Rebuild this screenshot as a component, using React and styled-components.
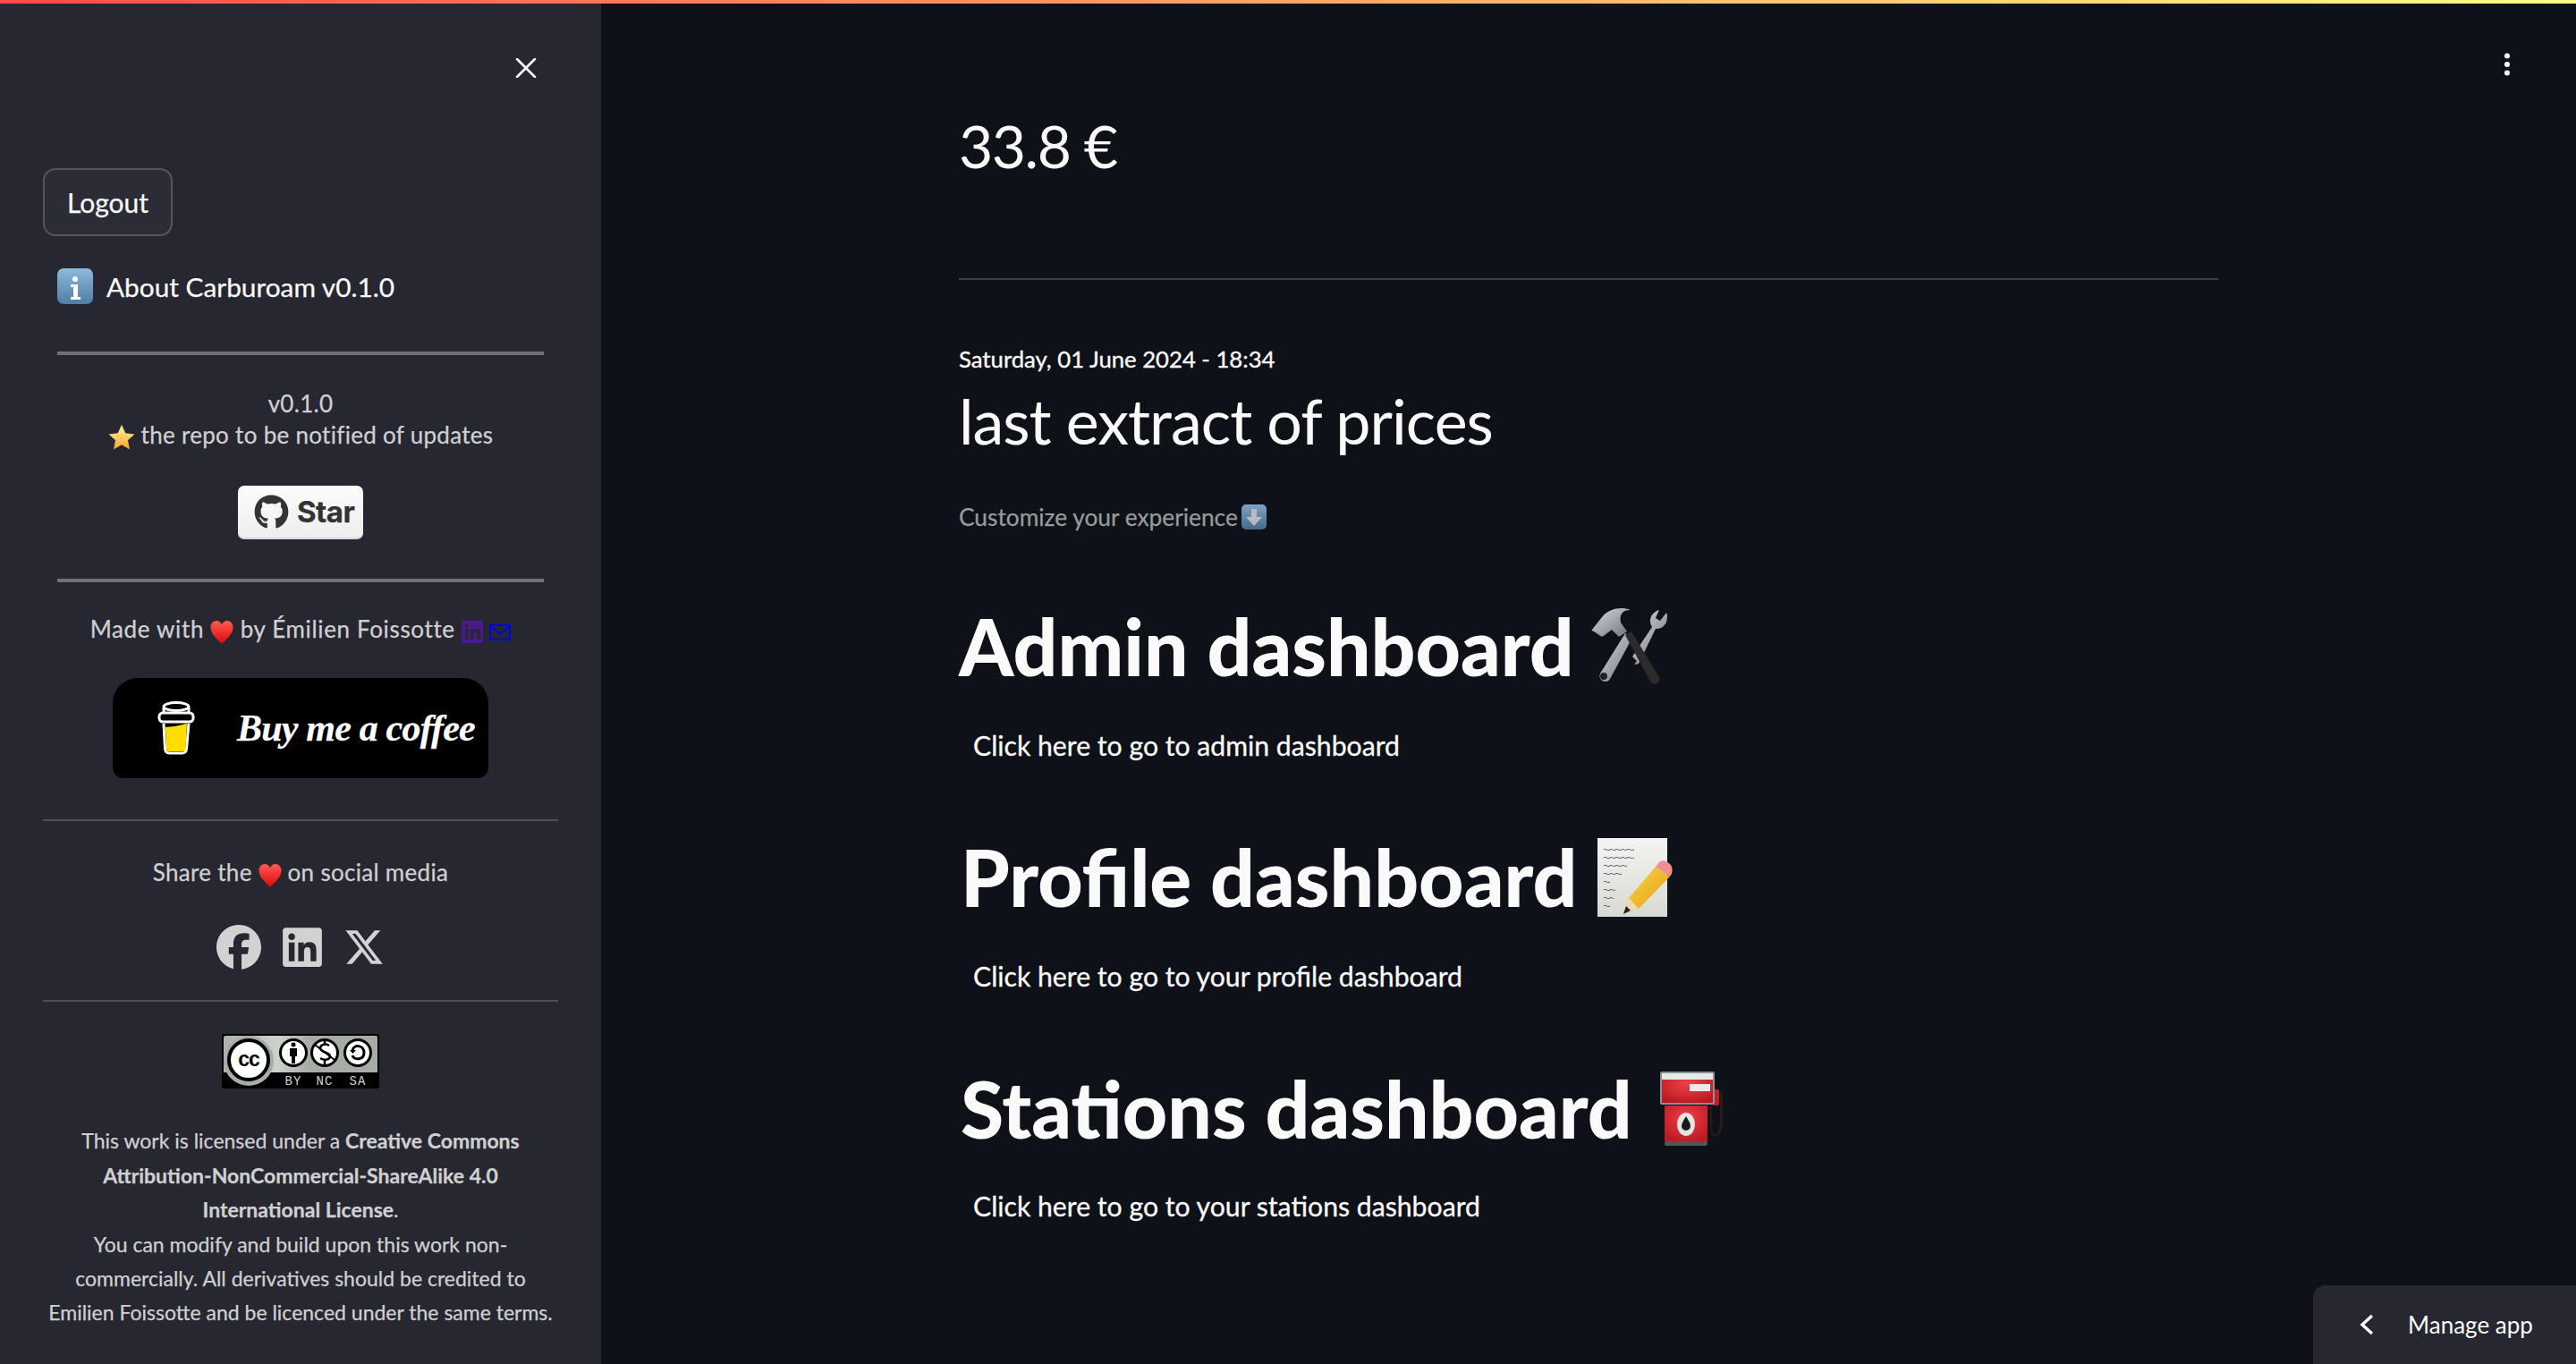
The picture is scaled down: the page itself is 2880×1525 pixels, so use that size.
import React from 'react';
import styled, { createGlobalStyle } from 'styled-components';
import { FaFacebook, FaLinkedin, FaXTwitter, FaGithub } from 'react-icons/fa6';

const GlobalStyle = createGlobalStyle`
  html, body {
    margin: 0;
    padding: 0;
    background: #0e1117;
    font-family: Lato, "Noto Sans", sans-serif;
    color: #fafafa;
  }
`;

const Page = styled.div`
  position: relative;
  display: grid;
  grid-template-columns: 672px 1fr;
  width: 100%;
  height: 100vh;
  overflow: hidden;
`;

const Decoration = styled.div`
  position: absolute;
  top: 0;
  left: 0;
  right: 0;
  height: 4px;
  background: linear-gradient(90deg, #ff4b4b, #fffd80);
`;

const Sidebar = styled.aside`
  display: flex;
  flex-direction: column;
  background: #262730;
  padding: 0 48px;
  box-sizing: border-box;
  -webkit-text-stroke: 0.25px;
`;

const CloseButton = styled.div`
  align-self: flex-end;
  margin: 65px 24px 0 0;
  width: 24px;
  height: 22px;
  svg {
    display: block;
  }
`;

const LogoutButton = styled.button`
  align-self: flex-start;
  margin-top: 101px;
  width: 145px;
  height: 76px;
  background: #2b2c36;
  border: 2px solid rgba(250, 250, 250, 0.2);
  border-radius: 14px;
  color: #fafafa;
  font: 400 30px Lato, sans-serif;
`;

const AboutRow = styled.div`
  display: flex;
  align-items: center;
  gap: 15px;
  margin: 36px 0 0 16px;
  height: 40px;
  font-size: 29.8px;
`;

const StrongRule = styled.hr`
  margin: ${(p) => p.$top}px 16px 0;
  height: 4px;
  border: 0;
  background: #717175;
`;

const ThinRule = styled.hr`
  margin: ${(p) => p.$top}px 0 0;
  height: 2px;
  border: 0;
  background: #4d4e56;
`;

const SideText = styled.div`
  margin-top: ${(p) => p.$top}px;
  text-align: center;
  font-size: 26px;
  letter-spacing: ${(p) => p.$spacing || 0.3}px;
  line-height: ${(p) => p.$lh || 36}px;
  color: #d0d0d2;
  white-space: nowrap;
`;

const StarBadge = styled.div`
  align-self: center;
  display: flex;
  align-items: center;
  gap: 9px;
  box-sizing: border-box;
  margin-top: 39px;
  width: 140px;
  height: 60px;
  padding-left: 18px;
  border-radius: 7px;
  background: linear-gradient(#fcfcfc, #eeeeee);
  border-bottom: 2px solid #d8d8d8;
  color: #333333;
  font: 700 33px Inter, Lato, sans-serif;
  letter-spacing: -0.5px;
`;

const CoffeeButton = styled.div`
  align-self: center;
  display: flex;
  align-items: center;
  box-sizing: border-box;
  margin-top: 37px;
  width: 420px;
  height: 112px;
  padding-left: 50px;
  gap: 47px;
  background: #000000;
  border-radius: 28px 28px 12px 12px;
`;

const CoffeeText = styled.span`
  color: #ffffff;
  font: italic 700 42px "Liberation Serif", serif;
  letter-spacing: -0.8px;
  white-space: nowrap;
`;

const SocialRow = styled.div`
  display: flex;
  align-items: center;
  justify-content: center;
  gap: 21px;
  margin-top: 41px;
  height: 50px;
  color: #d2d2d2;
  svg {
    display: block;
  }
`;

const LicenseBadge = styled.div`
  align-self: center;
  margin-top: 36px;
  height: 61px;
  svg {
    display: block;
  }
`;

const LicenseText = styled.div`
  margin: 39px -10px 0;
  text-align: center;
  font-size: 23px;
  line-height: 38.4px;
  color: #d0d0d2;
  strong {
    font-weight: 700;
  }
`;

const Main = styled.main`
  display: flex;
  flex-direction: column;
  padding: 117px 0 0 400px;
  width: 1808px;
  box-sizing: border-box;
`;

const Price = styled.div`
  font-size: 66px;
  letter-spacing: -1.5px;
  line-height: 92px;
`;

const MainRule = styled.hr`
  margin: 102px 0 0;
  height: 2px;
  border: 0;
  background: #3d3f45;
`;

const DateLine = styled.div`
  margin-top: 70px;
  font-size: 25.7px;
  line-height: 36px;
  -webkit-text-stroke: 0.35px;
`;

const Subtitle = styled.div`
  margin-top: 7px;
  font-size: 70px;
  letter-spacing: -1px;
  line-height: 88px;
`;

const Hint = styled.div`
  display: flex;
  align-items: center;
  gap: 4px;
  margin-top: 46px;
  font-size: 26.3px;
  line-height: 36px;
  color: #989a9d;
  -webkit-text-stroke: 0.25px;
`;

const Section = styled.section`
  display: flex;
  flex-direction: column;
  margin-top: ${(p) => p.$top}px;
`;

const Heading = styled.h1`
  display: flex;
  align-items: center;
  gap: ${(p) => p.$gap}px;
  margin: 0;
  height: 90px;
  padding-left: ${(p) => p.$indent || 0}px;
  font-size: 87.5px;
  font-weight: 900;
  line-height: 90px;
  color: #fafafa;
`;

const SectionLink = styled.a`
  margin: ${(p) => p.$top}px 0 0 16px;
  font-size: 30.2px;
  line-height: 40px;
  color: #fafafa;
  -webkit-text-stroke: 0.3px;
`;

const MenuButton = styled.div`
  position: absolute;
  top: 59px;
  left: 2799px;
  svg {
    display: block;
  }
`;

const ManageApp = styled.div`
  position: absolute;
  right: 0;
  bottom: 0;
  display: flex;
  align-items: center;
  gap: 38px;
  box-sizing: border-box;
  width: 294px;
  height: 88px;
  padding: 0 0 0 52px;
  background: #262730;
  border-top-left-radius: 14px;
  font-size: 26px;
  color: #fafafa;
  svg {
    display: block;
    flex: none;
  }
`;

const Glyph = styled.svg`
  display: inline-block;
  vertical-align: ${(p) => p.$align || 'middle'};
  flex: none;
`;

const InfoEmoji = () => (
  <Glyph width="40" height="40" viewBox="0 0 40 40">
    <defs>
      <linearGradient id="infoBg" x1="0" y1="0" x2="0" y2="1">
        <stop offset="0" stopColor="#8eb9dc" />
        <stop offset="1" stopColor="#4f7da4" />
      </linearGradient>
    </defs>
    <rect x="0" y="0" width="40" height="40" rx="7" fill="url(#infoBg)" />
    <circle cx="20" cy="12" r="3" fill="#fff" />
    <path d="M15 18h8v14h3v3H15v-3h3V21h-3z" fill="#fff" />
  </Glyph>
);

const StarEmoji = () => (
  <Glyph width="30" height="30" viewBox="0 0 28 28">
    <defs>
      <linearGradient id="starBg" x1="0" y1="0" x2="0" y2="1">
        <stop offset="0" stopColor="#fff3a8" />
        <stop offset="1" stopColor="#f6a623" />
      </linearGradient>
    </defs>
    <path d="M14 1l4 8.6 9.5 1.1-7 6.4 1.9 9.4L14 21.8l-8.4 4.7 1.9-9.4-7-6.4L10 9.6z" fill="url(#starBg)" />
  </Glyph>
);

const HeartEmoji = ({ id }) => (
  <Glyph width="26" height="26" viewBox="0 0 27 28">
    <defs>
      <linearGradient id={id} x1="0" y1="0" x2="0" y2="1">
        <stop offset="0" stopColor="#ff5a52" />
        <stop offset="1" stopColor="#d8080c" />
      </linearGradient>
    </defs>
    <path d="M13.5 28C8 22 0 16 0 8c0-5 3.4-8 7-8 3 0 5.4 2 6.500 4.500C14.600 2 17 0 20 0c3.600 0 7 3 7 8 0 8-8 14-13.500 20z" fill={`url(#${id})`} />
  </Glyph>
);

const LinkedinMini = () => (
  <Glyph width="24" height="25" viewBox="0 0 24 25">
    <rect width="24" height="25" fill="#4a1a8c" />
    <rect x="4" y="9" width="3.500" height="12" fill="#262730" />
    <rect x="4" y="4" width="3.500" height="3" fill="#262730" />
    <path d="M10 9h3.500v2c1-2 6.500-3 7.500 2v8h-3.500v-7c0-2.500-4-2.500-4 0v7H10z" fill="#262730" />
  </Glyph>
);

const MailMini = () => (
  <Glyph width="24" height="18" viewBox="0 0 24 18" fill="none" stroke="#0000ee" strokeWidth="2">
    <rect x="1" y="1" width="22" height="16" />
    <path d="M1 2l11 9L23 2" />
  </Glyph>
);

const CupIcon = () => (
  <Glyph width="42" height="60" viewBox="0 0 42 60" fill="none" stroke="#fff" strokeWidth="3">
    <path d="M7 25l1.500 28c0.200 3 2 5 5 5h14c3 0 4.800-2 5-5L35 25" fill="#000" />
    <path d="M9 29l11-1 13-3-1.500 28c-0.100 2-1 3-3 3H13c-2 0-3-1-3.200-3z" fill="#ffdd00" stroke="none" />
    <rect x="2" y="13" width="38" height="10" rx="4" fill="#000" />
    <ellipse cx="21" cy="6" rx="14" ry="4.500" fill="#000" />
    <path d="M7 7v6M35 7v6" />
  </Glyph>
);

const CcBadge = () => (
  <Glyph width="176" height="61" viewBox="0 0 176 61">
    <defs>
      <linearGradient id="ccBg" x1="0" y1="0" x2="1" y2="0">
        <stop offset="0" stopColor="#aab2ab" />
        <stop offset="0.35" stopColor="#cdd2cc" />
        <stop offset="0.55" stopColor="#a6ada5" />
        <stop offset="1" stopColor="#a6ada5" />
      </linearGradient>
    </defs>
    <rect width="176" height="61" rx="3" fill="#000" />
    <path d="M2 4a2 2 0 0 1 2-2h168a2 2 0 0 1 2 2v39H2z" fill="url(#ccBg)" />
    <path d="M2 43l14 16h28l14-16z" fill="#000" />
    <circle cx="30" cy="30" r="28" fill="#a6ada5" />
    <circle cx="30" cy="29" r="22" fill="#fff" stroke="#000" strokeWidth="4" />
    <text x="30" y="36" textAnchor="middle" fontFamily="Liberation Sans" fontWeight="700" fontSize="23" letterSpacing="-1" fill="#000" stroke="none">cc</text>
    <circle cx="80" cy="21" r="14.500" fill="#fff" stroke="#000" strokeWidth="3" />
    <circle cx="80" cy="12" r="2.500" fill="#000" />
    <path d="M76 16h8v9h-2v8h-4v-8h-2z" fill="#000" />
    <circle cx="115" cy="21" r="14.500" fill="#fff" stroke="#000" strokeWidth="3" />
    <path d="M120 13c-4-3-10-1-10 3 0 5 11 4 11 9 0 4-7 5-11 2M115 8v4M115 29v5" fill="none" stroke="#000" strokeWidth="2.500" />
    <path d="M104 12l22 17" stroke="#000" strokeWidth="2" />
    <circle cx="152" cy="21" r="14.500" fill="#fff" stroke="#000" strokeWidth="3" />
    <path d="M146 19c1-8 13-7 13 2 0 8-11 9-13 3" fill="none" stroke="#000" strokeWidth="3" />
    <path d="M143 18h7l-3.500 4z" fill="#000" />
    <text x="80" y="57" textAnchor="middle" fontFamily="Liberation Mono" fontSize="14" letterSpacing="1" fill="#d0d0d0" stroke="none">BY</text>
    <text x="115" y="57" textAnchor="middle" fontFamily="Liberation Mono" fontSize="14" letterSpacing="1" fill="#d0d0d0" stroke="none">NC</text>
    <text x="152" y="57" textAnchor="middle" fontFamily="Liberation Mono" fontSize="14" letterSpacing="1" fill="#d0d0d0" stroke="none">SA</text>
  </Glyph>
);

const DownArrowEmoji = () => (
  <Glyph width="28" height="28" viewBox="0 0 28 28">
    <defs>
      <linearGradient id="arrowBg" x1="0" y1="0" x2="0" y2="1">
        <stop offset="0" stopColor="#7ea3c4" />
        <stop offset="1" stopColor="#46688a" />
      </linearGradient>
    </defs>
    <rect width="28" height="28" rx="5" fill="url(#arrowBg)" />
    <path d="M11 5h6v9h6l-9 10-9-10h6z" fill="#b9bcc0" />
  </Glyph>
);

const ToolsEmoji = () => (
  <Glyph width="88" height="86" viewBox="0 0 88 86">
    <defs>
      <linearGradient id="steel" x1="0" y1="0" x2="1" y2="1">
        <stop offset="0" stopColor="#d9dde2" />
        <stop offset="1" stopColor="#6c7078" />
      </linearGradient>
    </defs>
    <path d="M40 28l8 5-25 46c-3 6-14 2-11-6z" fill="url(#steel)" />
    <circle cx="16" cy="76" r="4" fill="#201f22" />
    <path d="M78 2c-5 1-10 6-10 12 0 3 1 5 2 7L48 54l5 5-3 4 5-1 19-39c7 1 13-5 13-13 0-2 0-4-1-5l-7 9-5-3z" fill="url(#steel)" />
    <path d="M40 30l7-4 31 51c3 6-7 11-10 5z" fill="#2b2a2d" />
    <path d="M3 24l11-14C22 0 36-2 46 2c-8 0-13 4-11 14l7 10-9 6-8-8-8 6c-2 2-4 2-6 0l-6-4c-2-1-3-1-2-2z" fill="url(#steel)" />
  </Glyph>
);

const SCRIBBLES = [
  'M7 13c3-2 4 2 7 0s3 2 6 0 4 2 7 0 3 2 6 0 4 2 8 0',
  'M7 22c3-2 4 2 7 0s3 2 6 0 4 2 7 0 3 2 6 0 4 2 8 0',
  'M7 31c3-2 4 2 7 0s3 2 6 0 4 2 7 0 3 2 6 0',
  'M7 40c3-2 4 2 7 0s3 2 6 0 4 2 7 0',
  'M7 49c3-2 4 2 7 0',
  'M7 58c3-2 4 2 7 0s3 2 6 0',
  'M7 67c3-2 4 2 7 0s3 2 4 0',
  'M7 76c3-2 4 2 7 0',
];

const MemoEmoji = () => (
  <Glyph width="84" height="88" viewBox="0 0 84 88">
    <defs>
      <linearGradient id="paper" x1="0" y1="0" x2="0" y2="1">
        <stop offset="0" stopColor="#f4f4f2" />
        <stop offset="1" stopColor="#d8d8d4" />
      </linearGradient>
      <linearGradient id="pencil" x1="0" y1="0" x2="1" y2="1">
        <stop offset="0" stopColor="#ffd84a" />
        <stop offset="1" stopColor="#e09a10" />
      </linearGradient>
    </defs>
    <rect x="0" y="0" width="78" height="88" fill="url(#paper)" />
    <g fill="none" stroke="#55565a" strokeWidth="1">
      {SCRIBBLES.map((d) => (
        <path key={d} d={d} />
      ))}
    </g>
    <path d="M65 32l16 11-35 36-17 6 6-18z" fill="url(#pencil)" />
    <path d="M35 67l11 12-17 6z" fill="#ecd9b8" />
    <path d="M29 85l3-9 5 5z" fill="#222" />
    <path d="M69 27c3-3 8-2 12 2 3 3 3 8 2 11l-2 3-16-11z" fill="#ef8f92" />
  </Glyph>
);

const FuelEmoji = () => (
  <Glyph width="76" height="84" viewBox="0 0 76 84">
    <defs>
      <radialGradient id="fuelRed" cx="0.5" cy="0.35" r="0.7">
        <stop offset="0" stopColor="#f13f48" />
        <stop offset="1" stopColor="#b81a22" />
      </radialGradient>
    </defs>
    <path d="M60 18l8 4c3 2 3 3 3 6v28c0 7-3 17-8 17s-6-6-6-12V38h2v23c0 5 1 9 4 9s5-8 5-14V30l-6-3z" fill="#2a1a1c" />
    <rect x="60" y="20" width="7" height="18" rx="2" fill="#c22028" />
    <rect x="6" y="38" width="48" height="40" fill="url(#fuelRed)" />
    <rect x="6" y="78" width="48" height="5" rx="2" fill="#555" />
    <rect x="1" y="0" width="61" height="37" rx="2" fill="#8f9094" />
    <rect x="3" y="2" width="57" height="33" fill="url(#fuelRed)" />
    <rect x="3" y="2" width="57" height="7" fill="#e9e9e6" />
    <rect x="34" y="14" width="23" height="8" fill="#e8e8e8" />
    <ellipse cx="30" cy="59" rx="10" ry="13" fill="#e4e4e0" />
    <path d="M30 50c3 5 5 8 5 11a5 5 0 0 1-10 0c0-3 2-6 5-11z" fill="#1a1a1c" />
  </Glyph>
);

export default function App() {
  return (
    <Page>
      <GlobalStyle />
      <Sidebar>
        <CloseButton>
          <svg width="24" height="22" viewBox="0 0 24 22" stroke="#fafafa" strokeWidth="2.600" strokeLinecap="round">
            <path d="M2 1l20 20M22 1L2 21" />
          </svg>
        </CloseButton>
        <LogoutButton>Logout</LogoutButton>
        <AboutRow>
          <InfoEmoji />
          <span>About Carburoam v0.1.0</span>
        </AboutRow>
        <StrongRule $top={53} />
        <SideText $top={37} $lh={35}>
          v0.1.0
          <br />
          <StarEmoji /> the repo to be notified of updates
        </SideText>
        <StarBadge>
          <FaGithub size={39} />
          <span>Star</span>
        </StarBadge>
        <StrongRule $top={44} />
        <SideText $top={34} $spacing={0.65}>
          Made with <HeartEmoji id="heartA" /> by Émilien Foissotte <LinkedinMini /> <MailMini />
        </SideText>
        <CoffeeButton>
          <CupIcon />
          <CoffeeText>Buy me a coffee</CoffeeText>
        </CoffeeButton>
        <ThinRule $top={46} />
        <SideText $top={39}>
          Share the <HeartEmoji id="heartB" /> on social media
        </SideText>
        <SocialRow>
          <FaFacebook size={50} />
          <FaLinkedin size={50} />
          <FaXTwitter size={46} />
        </SocialRow>
        <ThinRule $top={34} />
        <LicenseBadge>
          <CcBadge />
        </LicenseBadge>
        <LicenseText>
          This work is licensed under a <strong>Creative Commons</strong>
          <br />
          <strong>Attribution-NonCommercial-ShareAlike 4.0</strong>
          <br />
          <strong>International License</strong>.
          <br />
          You can modify and build upon this work non-
          <br />
          commercially. All derivatives should be credited to
          <br />
          Emilien Foissotte and be licenced under the same terms.
        </LicenseText>
      </Sidebar>
      <Main>
        <Price>33.8 €</Price>
        <MainRule />
        <DateLine>Saturday, 01 June 2024 - 18:34</DateLine>
        <Subtitle>last extract of prices</Subtitle>
        <Hint>
          Customize your experience
          <DownArrowEmoji />
        </Hint>
        <Section $top={82}>
          <Heading $gap={17}>
            Admin dashboard <ToolsEmoji />
          </Heading>
          <SectionLink $top={45}>Click here to go to admin dashboard</SectionLink>
        </Section>
        <Section $top={83}>
          <Heading $gap={23} $indent={2}>
            Profile dashboard <MemoEmoji />
          </Heading>
          <SectionLink $top={45}>Click here to go to your profile dashboard</SectionLink>
        </Section>
        <Section $top={84}>
          <Heading $gap={30} $indent={2}>
            Stations dashboard <FuelEmoji />
          </Heading>
          <SectionLink $top={43}>Click here to go to your stations dashboard</SectionLink>
        </Section>
      </Main>
      <Decoration />
      <MenuButton>
        <svg width="8" height="26" viewBox="0 0 8 26" fill="#fafafa">
          <circle cx="4" cy="3.500" r="3" />
          <circle cx="4" cy="13" r="3" />
          <circle cx="4" cy="22.500" r="3" />
        </svg>
      </MenuButton>
      <ManageApp>
        <svg width="16" height="24" viewBox="0 0 16 24" fill="none" stroke="#fafafa" strokeWidth="3.400">
          <path d="M14 2L3 12l11 10" />
        </svg>
        <span>Manage app</span>
      </ManageApp>
    </Page>
  );
}
